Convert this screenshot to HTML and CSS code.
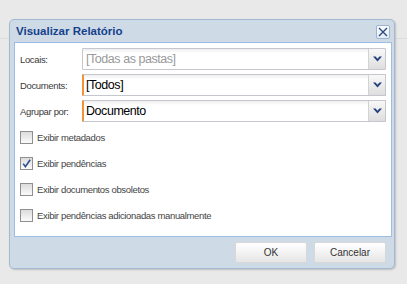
FILE: index.html
```html
<!DOCTYPE html>
<html lang="pt">
<head>
<meta charset="utf-8">
<title>Visualizar Relatório</title>
<link rel="stylesheet" href="styles.css">
</head>
<body>
<div class="desk">
  <div class="window">
    <div class="header">
      <span class="title">Visualizar Relatório</span>
      <button class="close" aria-label="Fechar">
        <svg width="10" height="10" viewBox="0 0 10 10"><path d="M1 1L9 9M9 1L1 9" stroke="#2d4c86" stroke-width="1.4" fill="none"/></svg>
      </button>
    </div>
    <div class="body">
      <div class="fields">
        <div class="field">
          <label class="label">Locais:</label>
          <div class="combo">
            <span class="value placeholder">[Todas as pastas]</span>
            <span class="trigger"><svg width="9" height="6" viewBox="0 0 9 6"><path d="M0 0.5h2.6l1.9 2.2 1.9-2.2H9L4.5 5.5z" fill="#23417c"/></svg></span>
          </div>
        </div>
        <div class="field">
          <label class="label">Documents:</label>
          <div class="combo required">
            <span class="value">[Todos]</span>
            <span class="trigger"><svg width="9" height="6" viewBox="0 0 9 6"><path d="M0 0.5h2.6l1.9 2.2 1.9-2.2H9L4.5 5.5z" fill="#23417c"/></svg></span>
          </div>
        </div>
        <div class="field">
          <label class="label">Agrupar por:</label>
          <div class="combo required">
            <span class="value">Documento</span>
            <span class="trigger"><svg width="9" height="6" viewBox="0 0 9 6"><path d="M0 0.5h2.6l1.9 2.2 1.9-2.2H9L4.5 5.5z" fill="#23417c"/></svg></span>
          </div>
        </div>
      </div>
      <div class="checks">
        <div class="check"><span class="box"></span><span class="ctext">Exibir metadados</span></div>
        <div class="check"><span class="box checked"><svg width="11" height="11" viewBox="0 0 11 11"><path d="M2.2 5.6L4.4 8.6L9.2 1.8" stroke="#2b4c8c" stroke-width="1.6" fill="none"/></svg></span><span class="ctext">Exibir pendências</span></div>
        <div class="check"><span class="box"></span><span class="ctext">Exibir documentos obsoletos</span></div>
        <div class="check"><span class="box"></span><span class="ctext">Exibir pendências adicionadas manualmente</span></div>
      </div>
    </div>
    <div class="footer">
      <button class="btn">OK</button>
      <button class="btn">Cancelar</button>
    </div>
  </div>
</div>
</body>
</html>
```

FILE: styles.css
```css
* { box-sizing: border-box; }

html, body {
  margin: 0;
  padding: 0;
}

body {
  width: 407px;
  height: 284px;
  overflow: hidden;
  background: #e9e9e9;
  font-family: "Liberation Sans", Arial, sans-serif;
}

.desk {
  height: 284px;
  padding: 19px 0 0 9px;
  background:
    linear-gradient(#dddddd, #dddddd) 0 38px / 100% 1px no-repeat,
    #e9e9e9;
}

.window {
  width: 386px;
  height: 250px;
  border: 1px solid #a3b9d3;
  border-radius: 5px;
  background: #cfdae7;
  box-shadow: 1px 1px 2px rgba(0, 0, 0, 0.18);
  display: flex;
  flex-direction: column;
}

.header {
  height: 22px;
  display: flex;
  align-items: center;
  justify-content: space-between;
  padding: 0 4px 0 6px;
}

.title {
  font-weight: bold;
  font-size: 11.5px;
  color: #15428b;
}

.close {
  width: 14px;
  height: 14px;
  padding: 0;
  margin-top: 1px;
  border: 1px solid #9db3cf;
  border-radius: 2px;
  background: linear-gradient(#fafcfe, #e4ecf6);
  display: flex;
  align-items: center;
  justify-content: center;
}

.body {
  height: 195px;
  margin: 0 2px 0 4px;
  border: 1px solid #9fbde2;
  background: #ffffff;
  padding: 5px 5px 0 5px;
}

.fields {
  display: flex;
  flex-direction: column;
  gap: 4px;
}

.field {
  display: flex;
  align-items: center;
  height: 22px;
}

.label {
  width: 62px;
  flex: none;
  font-size: 9.5px;
  letter-spacing: -0.35px;
  color: #3a3a3a;
}

.combo {
  flex: 1;
  height: 22px;
  display: flex;
  border: 1px solid #c5c7d0;
  border-radius: 1px;
  background: linear-gradient(#eeeeee, #ffffff 4px);
}

.combo.required {
  border-left: 2px solid #f39237;
}

.value {
  flex: 1;
  padding-left: 3px;
  font-size: 12.5px;
  letter-spacing: -0.45px;
  line-height: 20px;
  color: #000;
}

.combo.required .value {
  padding-left: 2px;
}

.value.placeholder {
  color: #999999;
}

.trigger {
  width: 17px;
  flex: none;
  border-left: 1px solid #d3d3d3;
  background: linear-gradient(#f8f8f8, #dedede);
  display: flex;
  align-items: center;
  justify-content: center;
}

.checks {
  margin-top: 2px;
  display: flex;
  flex-direction: column;
}

.check {
  height: 26px;
  display: flex;
  align-items: center;
}

.box {
  width: 13px;
  height: 13px;
  margin-right: 4px;
  border: 1px solid #8f8f8f;
  background: linear-gradient(#dcdcdc, #fbfbfb);
  display: flex;
  align-items: center;
  justify-content: center;
}

.ctext {
  font-size: 9.5px;
  letter-spacing: -0.35px;
  color: #444444;
}

.footer {
  flex: 1;
  display: flex;
  justify-content: flex-end;
  align-items: flex-start;
  gap: 7px;
  padding: 5px 8px 0 0;
}

.btn {
  width: 72px;
  height: 21px;
  padding: 0;
  border: 1px solid #d8d8d8;
  border-radius: 2px;
  background: linear-gradient(#ffffff, #f4f4f4 45%, #e6e6e6);
  font-family: "Liberation Sans", Arial, sans-serif;
  font-size: 10px;
  color: #333333;
}
```
